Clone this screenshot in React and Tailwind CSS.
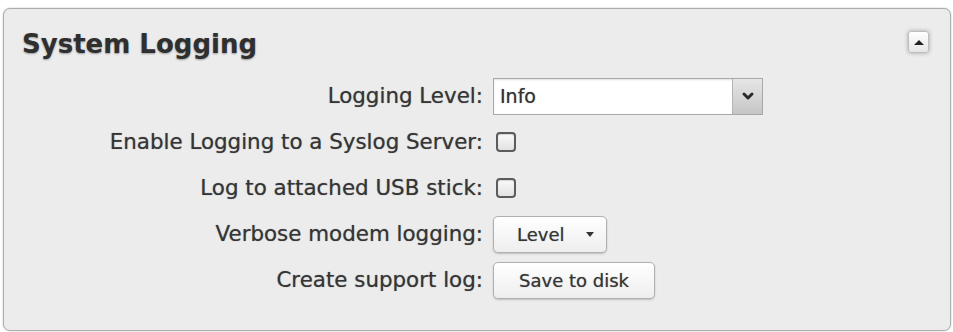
import { ChevronDown } from "lucide-react";

const font = { fontFamily: '"DejaVu Sans", Verdana, sans-serif' };

function Row({ label, children }) {
  return (
    <>
      <div className="h-[46px] flex items-center justify-end text-[21.4px] text-[#353535] whitespace-nowrap [text-shadow:0_0_1px_rgba(0,0,0,0.45)]">
        {label}
      </div>
      <div className="h-[46px] flex items-center">{children}</div>
    </>
  );
}

function Checkbox() {
  return (
    <span className="ml-[3px] block w-[20px] h-[20px] rounded-[4px] border-2 border-[#5c5c5c] bg-gradient-to-b from-[#fafafa] to-[#e2e2e2] shadow-[inset_0_1px_1px_rgba(0,0,0,0.15)]" />
  );
}

export default function App() {
  return (
    <div className="w-[953px] h-[332px] bg-white pt-[8px] pl-[3px] pr-[2px]" style={font}>
      <div className="relative h-[323px] rounded-[7px] border border-[#adadad] bg-[#ececec] shadow-[0_0_2px_rgba(0,0,0,0.25)] pt-[20px]">
        <h2 className="pl-[18px] text-[26px] leading-[30px] font-bold text-[#2f2f2f] [text-shadow:0_1px_2px_rgba(0,0,0,0.35)]">
          System Logging
        </h2>

        <button className="absolute top-[22px] right-[21px] w-[21px] h-[22px] rounded-[3px] border border-[#bdbdbd] bg-gradient-to-b from-white to-[#e6e6e6] shadow-[0_0_4px_rgba(0,0,0,0.3)] flex items-center justify-center">
          <span className="block w-0 h-0 border-l-[5px] border-r-[5px] border-b-[5px] border-l-transparent border-r-transparent border-b-[#222]" />
        </button>

        <div className="mt-[14px] grid grid-cols-[479px_1fr] gap-x-[10px]">
          <Row label="Logging Level:">
            <div className="w-[270px] h-[37px] flex border border-[#a9a9a9] bg-white shadow-[inset_0_1px_2px_rgba(0,0,0,0.12)]">
              <span className="flex-1 flex items-center pl-[6px] text-[19px] text-[#333] [text-shadow:0_0_1px_rgba(0,0,0,0.45)]">Info</span>
              <span className="w-[30px] flex items-center justify-center border-l border-[#b5b5b5] bg-gradient-to-b from-[#e6e6e6] to-[#c6c6c6]">
                <ChevronDown size={16} strokeWidth={4.5} className="text-[#2a2a2a]" />
              </span>
            </div>
          </Row>
          <Row label="Enable Logging to a Syslog Server:">
            <Checkbox />
          </Row>
          <Row label="Log to attached USB stick:">
            <Checkbox />
          </Row>
          <Row label="Verbose modem logging:">
            <button className="w-[114px] h-[37px] flex items-center pl-[23px] pr-[12px] rounded-[5px] border border-[#b0b0b0] bg-gradient-to-b from-white to-[#eeeeee] shadow-[0_1px_2px_rgba(0,0,0,0.2)] text-[18px] text-[#353535] [text-shadow:0_0_1px_rgba(0,0,0,0.45)]">
              <span>Level</span>
              <span className="ml-auto block w-0 h-0 border-l-[4px] border-r-[4px] border-t-[5px] border-l-transparent border-r-transparent border-t-[#333]" />
            </button>
          </Row>
          <Row label="Create support log:">
            <button className="w-[162px] h-[37px] flex items-center justify-center rounded-[5px] border border-[#b0b0b0] bg-gradient-to-b from-white to-[#eeeeee] shadow-[0_1px_2px_rgba(0,0,0,0.2)] text-[18px] text-[#353535] [text-shadow:0_0_1px_rgba(0,0,0,0.45)]">
              Save to disk
            </button>
          </Row>
        </div>
      </div>
    </div>
  );
}
